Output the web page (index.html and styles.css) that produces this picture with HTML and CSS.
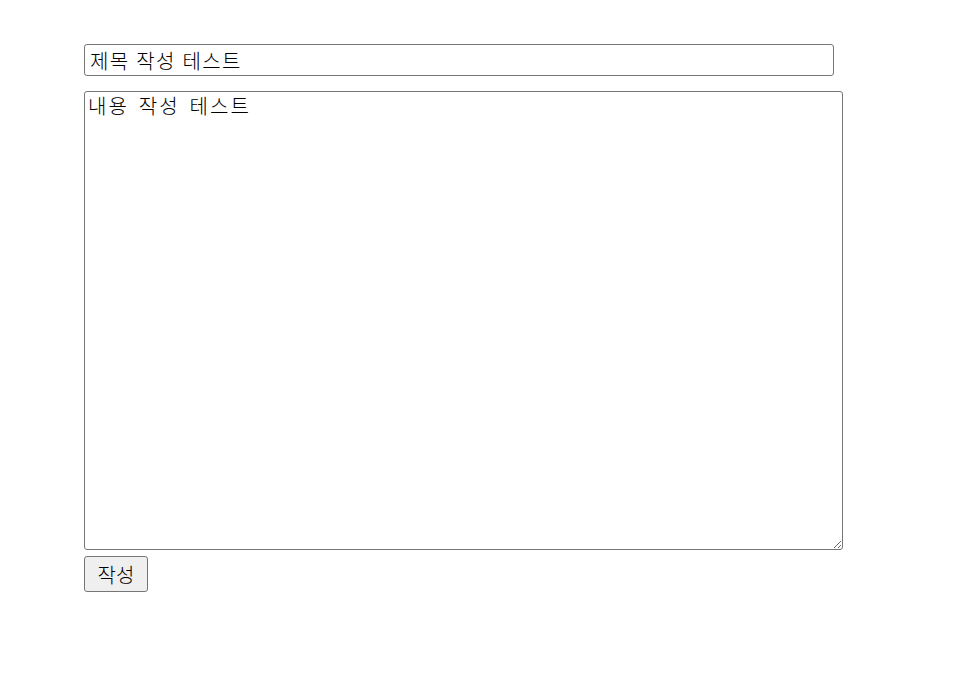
FILE: index.html
```html
<!DOCTYPE html>
<html lang="ko">
<head>
<meta charset="utf-8">
<link rel="stylesheet" href="styles.css">
</head>
<body>
<form class="write-form">
  <input class="title-input" type="text" value="제목 작성 테스트">
  <textarea class="content-input">내용 작성 테스트</textarea>
  <button class="submit-btn" type="button">작성</button>
</form>
</body>
</html>
```
FILE: styles.css
```css
body {
  margin: 0;
  background: #fff;
}
.write-form {
  display: flex;
  flex-direction: column;
  align-items: flex-start;
  padding: 44px 0 0 84px;
}
.title-input {
  box-sizing: border-box;
  width: 750px;
  height: 32px;
  border: 1px solid #767676;
  border-radius: 3px;
  padding: 1px 5px;
  font-family: "Noto Sans CJK KR", "Noto Sans", sans-serif;
  font-weight: 300;
  font-size: 20px;
  letter-spacing: 1.3px;
  color: #000;
  margin: 0 0 15px 0;
}
.content-input {
  box-sizing: border-box;
  width: 759px;
  height: 459px;
  border: 1px solid #767676;
  border-radius: 3px;
  padding: 2px 3px;
  font-family: "Noto Sans CJK KR", sans-serif;
  font-weight: 300;
  font-size: 20px;
  line-height: 24px;
  letter-spacing: 2.1px;
  word-spacing: 2px;
  color: #000;
  margin: 0 0 6px 0;
  resize: both;
}
.submit-btn {
  box-sizing: border-box;
  width: 64px;
  height: 36px;
  border: 1px solid #767676;
  border-radius: 3px;
  background: #efefef;
  font-family: "Noto Sans CJK KR", "Noto Sans", sans-serif;
  font-weight: 300;
  font-size: 20px;
  color: #000;
  padding: 0;
}
```
